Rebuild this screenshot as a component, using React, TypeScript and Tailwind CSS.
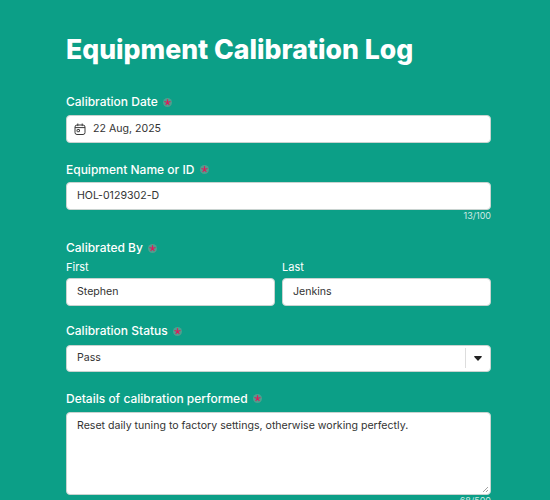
function Label({ text, className = '' }: { text: string; className?: string }) {
  return (
    <div className={`flex items-center h-[18px] text-[12px] leading-[18px] font-medium text-white ${className}`}>
      {text}
      <span className="ml-[5.5px] flex h-[9px] w-[9px] items-center justify-center rounded-full bg-[#4f9f8e]">
        <svg className="h-[7px] w-[7px]" viewBox="0 0 8 8">
          <path d="M4 4V.4M4 4 7.4 2.9M4 4l2.1 2.9M4 4 1.9 6.9M4 4 .6 2.9" stroke="#e0185a" strokeWidth="1.3" />
        </svg>
      </span>
    </div>
  );
}

function Box({ children, className = '' }: { children: React.ReactNode; className?: string }) {
  return (
    <div
      className={`flex items-center rounded-[4px] border border-[#c9d3d0] bg-white text-[10.6px] text-[#333333] ${className}`}
    >
      {children}
    </div>
  );
}

function CalendarIcon() {
  return (
    <svg className="h-[12px] w-[12px]" viewBox="0 0 12 12" fill="none" stroke="#3a3a3a" strokeWidth="1">
      <rect x="1" y="2" width="10" height="9.5" rx="2" />
      <path d="M3.8.5v2.6M8.2.5v2.6M1 4.6h10" />
      <rect x="3" y="6.5" width="2.5" height="2.2" rx=".4" />
    </svg>
  );
}

export default function App() {
  return (
    <div className="h-[500px] w-[550px] overflow-hidden bg-[#0c9f87] font-['Inter',sans-serif]">
      <div className="ml-[66px] w-[425px] pt-[31px]">
        <h1 className="text-[26.6px] leading-[36px] font-extrabold text-white">Equipment Calibration Log</h1>

        <div className="mt-[26px]">
          <Label text="Calibration Date" />
          <Box className="mt-[4px] h-[27.5px] pl-[7px]">
            <CalendarIcon />
            <span className="ml-[7px]">22 Aug, 2025</span>
          </Box>
        </div>

        <div className="mt-[18px]">
          <Label text="Equipment Name or ID" />
          <Box className="mt-[3.5px] h-[27.5px] px-[10px]">HOL-0129302-D</Box>
          <div className="mt-[0.5px] text-right text-[9px] leading-[12px] text-[#cfeae4]">13/100</div>
        </div>

        <div className="mt-[17px]">
          <Label text="Calibrated By" />
          <div className="mt-[2px] grid grid-cols-2 gap-[7px]">
            <div>
              <div className="text-[11px] leading-[16px] text-white">First</div>
              <Box className="mt-[3px] h-[27.5px] px-[10px]">Stephen</Box>
            </div>
            <div>
              <div className="text-[11px] leading-[16px] text-white">Last</div>
              <Box className="mt-[3px] h-[27.5px] px-[10px]">Jenkins</Box>
            </div>
          </div>
        </div>

        <div className="mt-[16.5px]">
          <Label text="Calibration Status" />
          <Box className="mt-[4.5px] h-[27.5px] pl-[10px]">
            <span className="flex-1">Pass</span>
            <span className="h-[20px] w-px bg-[#dddddd]" />
            <svg className="mx-[8px] h-[5px] w-[8px]" viewBox="0 0 8 5">
              <path d="M.8 0h6.4c.6 0 .9.6.5 1L4.5 4.6a.7.7 0 0 1-1 0L.3 1C-.1.6.2 0 .8 0Z" fill="#222222" />
            </svg>
          </Box>
        </div>

        <div className="mt-[17.5px]">
          <Label text="Details of calibration performed" />
          <div className="relative mt-[4.5px] h-[82.5px] rounded-[4px] border border-[#c9d3d0] bg-white px-[10px] py-[5px] text-[10.6px] leading-[16px] text-[#333333]">
            Reset daily tuning to factory settings, otherwise working perfectly.
            <svg className="absolute bottom-[1px] right-[1px] h-[7px] w-[7px]" viewBox="0 0 7 7">
              <path d="M1 6 6 1M4 6 6 4" stroke="#8a8a8a" strokeWidth="0.8" />
            </svg>
          </div>
          <div className="mt-[0.5px] text-right text-[9px] leading-[12px] text-[#cfeae4]">68/500</div>
        </div>
      </div>
    </div>
  );
}
